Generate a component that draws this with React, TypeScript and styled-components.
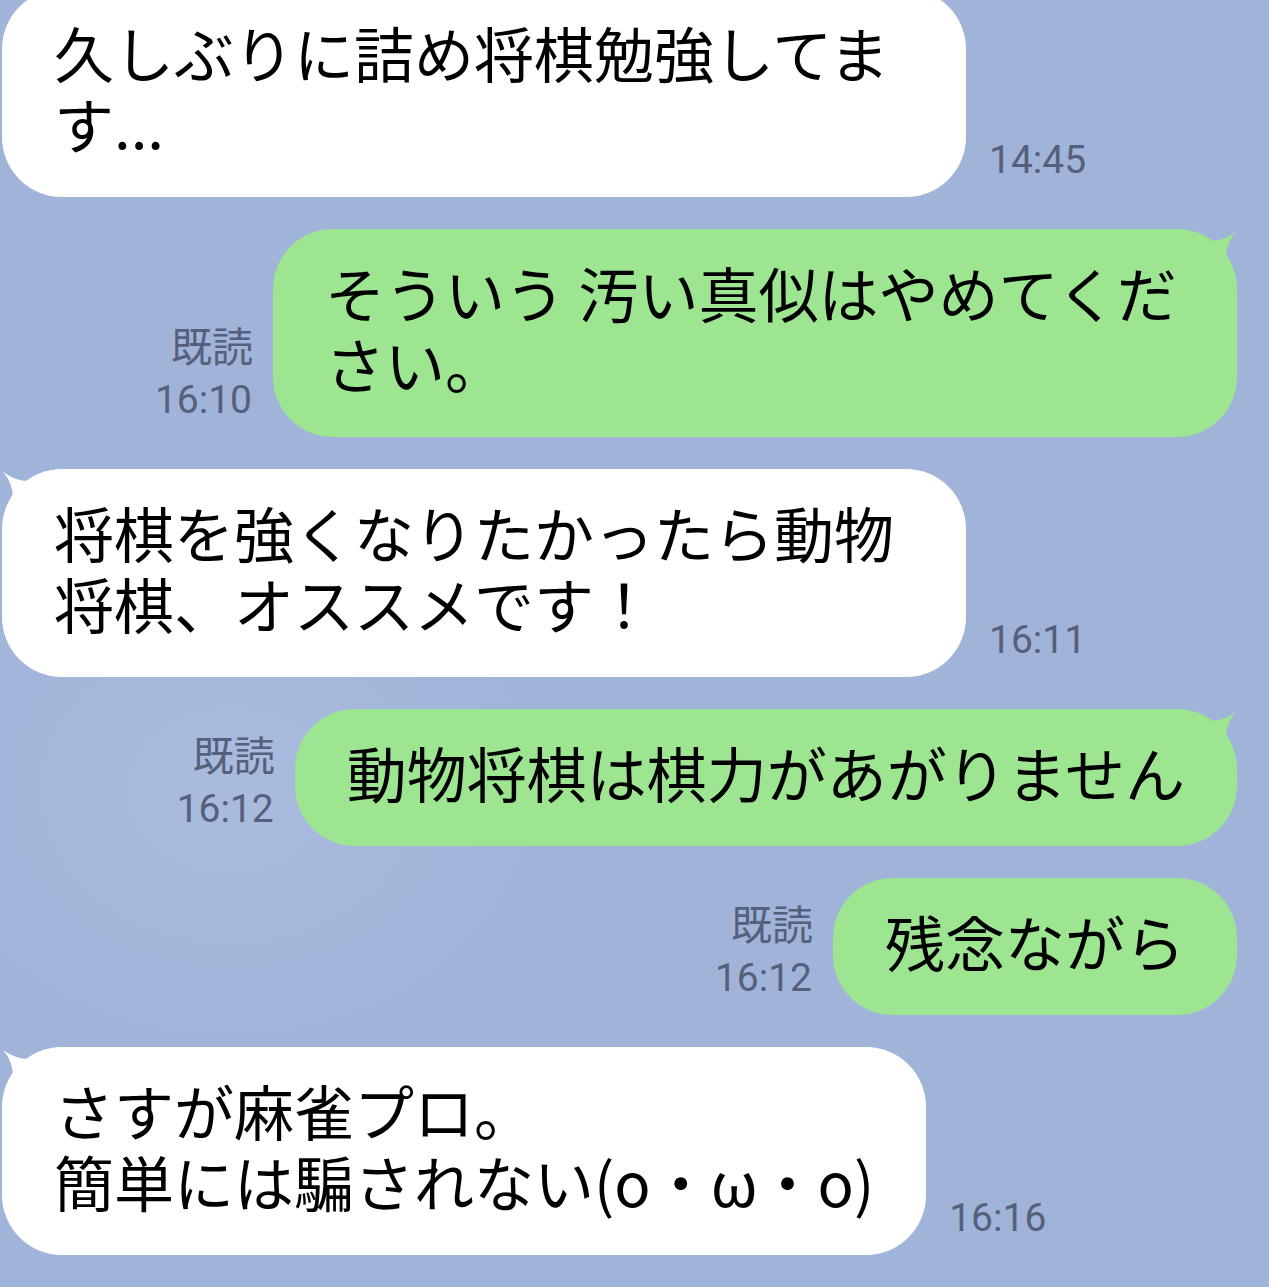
import React from "react";
import styled, { createGlobalStyle, css } from "styled-components";

const GlobalStyle = createGlobalStyle`
  html, body {
    margin: 0;
    padding: 0;
    background: #a0b4da;
  }
  * { box-sizing: border-box; }
`;

type Side = "in" | "out";

const Screen = styled.div`
  width: 1269px;
  height: 1287px;
  overflow: hidden;
  background-color: #a0b4da;
  background-image: radial-gradient(
    ellipse 320px 260px at 230px 790px,
    rgba(255, 255, 255, 0.1),
    rgba(255, 255, 255, 0) 100%
  );
`;

const ChatList = styled.div`
  display: flex;
  flex-direction: column;
  gap: 32px;
  margin-top: -11px;
`;

const Row = styled.div<{ $side: Side }>`
  display: flex;
  align-items: flex-end;
  justify-content: ${(p) => (p.$side === "out" ? "flex-end" : "flex-start")};
  gap: ${(p) => (p.$side === "out" ? "21px" : "23px")};
  padding: ${(p) => (p.$side === "out" ? "0 32px 0 0" : "0 0 0 2px")};
`;

const tailOut = css`
  &::before {
    content: "";
    position: absolute;
    top: 0;
    right: 0;
    width: 44px;
    height: 34px;
    background: inherit;
    clip-path: path("M0 8 Q22 18 43 3 Q33 14 33 30 Z");
  }
`;

const tailIn = css`
  &::before {
    content: "";
    position: absolute;
    top: 0;
    left: 0;
    width: 44px;
    height: 34px;
    background: inherit;
    clip-path: path("M44 8 Q22 18 1 3 Q11 14 11 30 Z");
  }
`;

const Bubble = styled.div<{ $side: Side; $tail: boolean }>`
  position: relative;
  max-width: 964px;
  padding: 27px 52px 39px 52px;
  border-radius: 60px;
  background: ${(p) => (p.$side === "out" ? "#9de591" : "#ffffff")};
  color: #000;
  font-family: "Noto Sans CJK JP", "Noto Sans", sans-serif;
  font-size: 60px;
  line-height: 71px;
  white-space: pre-wrap;
  word-break: normal;
  ${(p) => (p.$tail ? (p.$side === "out" ? tailOut : tailIn) : "")}
`;

const Meta = styled.div<{ $side: Side }>`
  display: flex;
  flex-direction: column;
  align-items: ${(p) => (p.$side === "out" ? "flex-end" : "flex-start")};
  margin-bottom: 13px;
  flex-shrink: 0;
  color: #56607a;
`;

const ReadMark = styled.div`
  font-family: "Noto Sans CJK JP", sans-serif;
  font-size: 41px;
  line-height: 48px;
  margin-bottom: 8px;
  margin-right: -1px;
`;

const Time = styled.div`
  font-family: Roboto, "Noto Sans", sans-serif;
  font-size: 39px;
  line-height: 48px;
`;

type Msg = {
  side: Side;
  text: string;
  time: string;
  tail: boolean;
  read?: boolean;
};

const messages: Msg[] = [
  { side: "in", text: "久しぶりに詰め将棋勉強してます...", time: "14:45", tail: false },
  { side: "out", text: "そういう 汚い真似はやめてください。", time: "16:10", tail: true, read: true },
  { side: "in", text: "将棋を強くなりたかったら動物将棋、オススメです！", time: "16:11", tail: true },
  { side: "out", text: "動物将棋は棋力があがりません", time: "16:12", tail: true, read: true },
  { side: "out", text: "残念ながら", time: "16:12", tail: false, read: true },
  { side: "in", text: "さすが麻雀プロ。\n簡単には騙されない(o・ω・o)", time: "16:16", tail: true },
];

export default function App() {
  return (
    <>
      <GlobalStyle />
      <Screen>
        <ChatList>
          {messages.map((m, i) => {
            const meta = (
              <Meta $side={m.side}>
                {m.read && <ReadMark>既読</ReadMark>}
                <Time>{m.time}</Time>
              </Meta>
            );
            const bubble = (
              <Bubble $side={m.side} $tail={m.tail}>
                {m.text}
              </Bubble>
            );
            return (
              <Row key={i} $side={m.side}>
                {m.side === "out" ? (
                  <>
                    {meta}
                    {bubble}
                  </>
                ) : (
                  <>
                    {bubble}
                    {meta}
                  </>
                )}
              </Row>
            );
          })}
        </ChatList>
      </Screen>
    </>
  );
}
